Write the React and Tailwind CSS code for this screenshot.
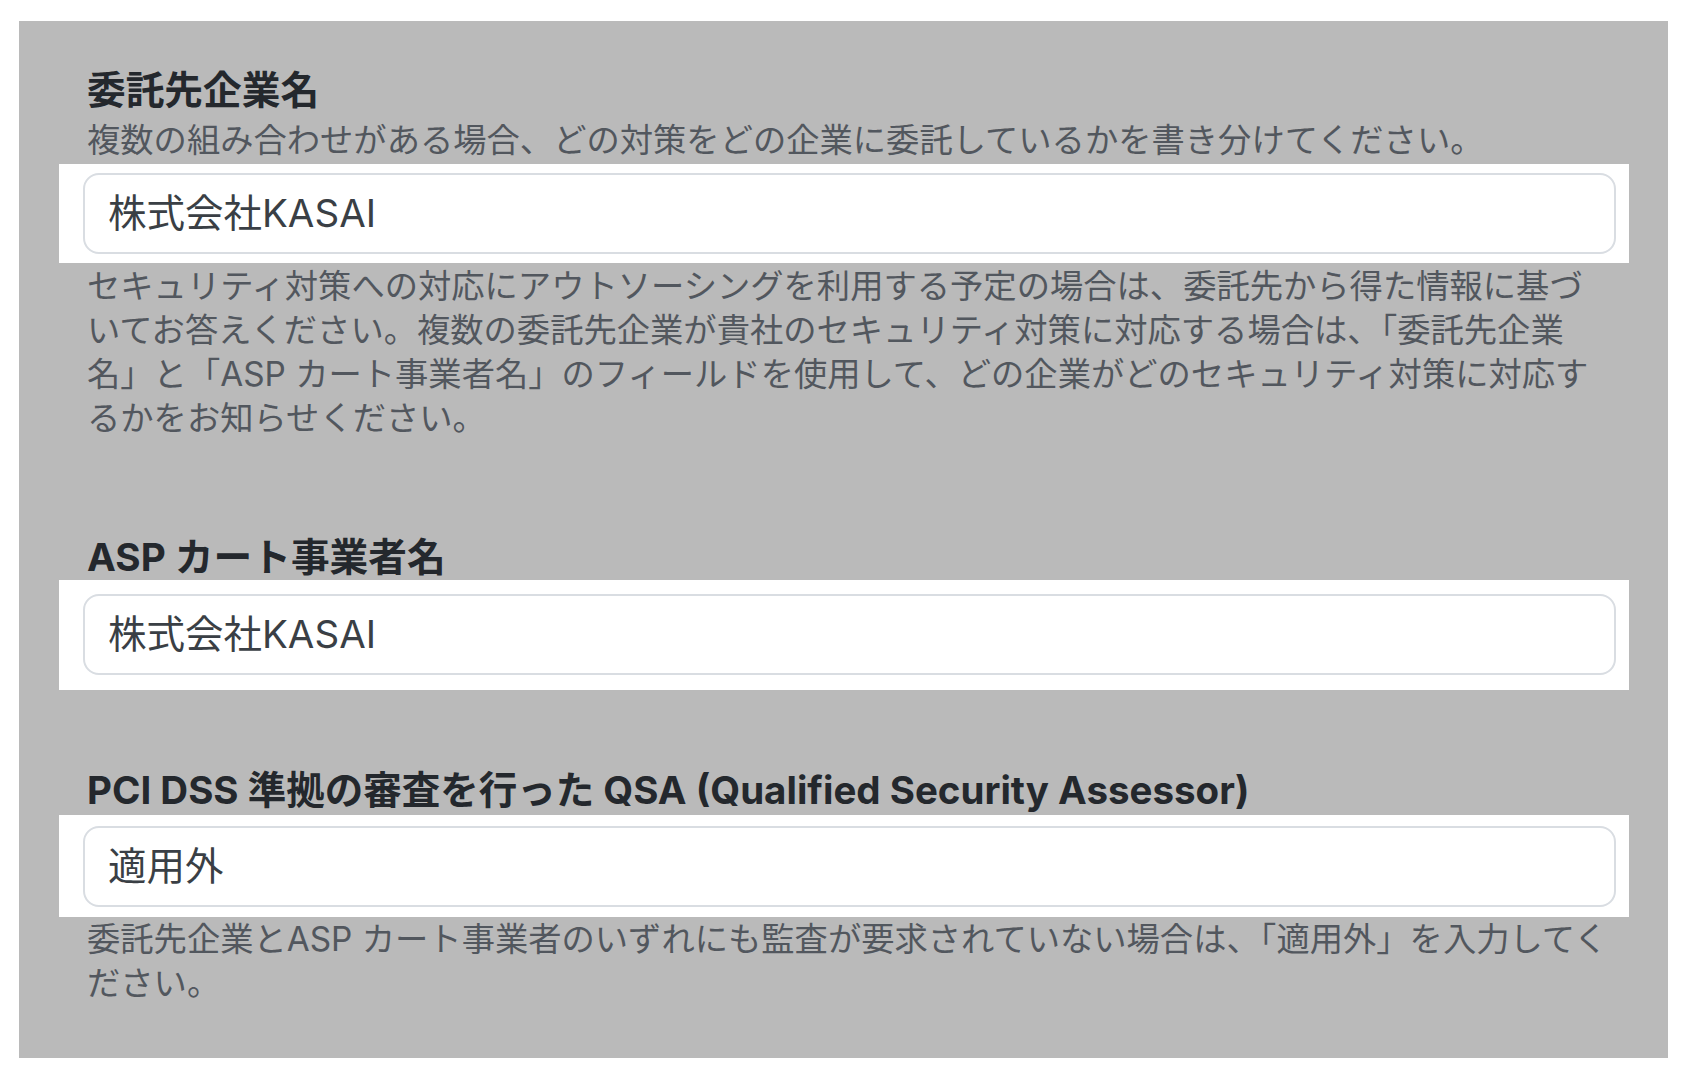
import React from "react";

const FONT = { fontFamily: 'Inter, "Noto Sans CJK JP", sans-serif' };

function Line({ children }) {
  return <span className="block whitespace-nowrap">{children}</span>;
}

function InputBand({ value, pt, pb, mt }) {
  return (
    <div className={`-ml-[28px] w-[1570px] bg-white pl-[24px] pr-[13px] ${pt} ${pb} ${mt}`}>
      <div className="flex h-[81px] items-center rounded-[16px] border-2 border-[#d9dde2] bg-white pl-[23px] text-[38.5px] text-[#3a3f45]">
        {value}
      </div>
    </div>
  );
}

export default function App() {
  return (
    <div className="min-h-[1080px] w-[1688px] bg-white pt-[21px] pl-[19px]" style={FONT}>
      <div className="flex h-[1037px] w-[1649px] flex-col bg-[#bababa] pl-[68px] pt-[50px]">
        <h2 className="text-[38.7px] font-bold leading-[38px] text-[#24282d]">委託先企業名</h2>
        <p className="mt-[9px] text-[33.3px] leading-[44px] text-[#52575e]">
          複数の組み合わせがある場合、どの対策をどの企業に委託しているかを書き分けてください。
        </p>
        <InputBand value="株式会社KASAI" pt="pt-[9px]" pb="pb-[9px]" mt="mt-[2px]" />
        <div className="mt-[1px] text-[33.3px] leading-[44px] text-[#52575e]">
          <Line>セキュリティ対策への対応にアウトソーシングを利用する予定の場合は、委託先から得た情報に基づ</Line>
          <Line>いてお答えください。複数の委託先企業が貴社のセキュリティ対策に対応する場合は、「委託先企業</Line>
          <Line>名」と「ASP カート事業者名」のフィールドを使用して、どの企業がどのセキュリティ対策に対応す</Line>
          <Line>るかをお知らせください。</Line>
        </div>

        <h2 className="mt-[98px] text-[38.7px] font-bold leading-[38px] text-[#24282d]">ASP カート事業者名</h2>
        <InputBand value="株式会社KASAI" pt="pt-[14px]" pb="pb-[15px]" mt="mt-[4px]" />

        <h2 className="mt-[81px] text-[38.5px] font-bold leading-[38px] text-[#24282d]">
          PCI DSS 準拠の審査を行った QSA (Qualified Security Assessor)
        </h2>
        <InputBand value="適用外" pt="pt-[11px]" pb="pb-[10px]" mt="mt-[6px]" />
        <div className="text-[33.3px] leading-[44px] text-[#52575e]">
          <Line>委託先企業とASP カート事業者のいずれにも監査が要求されていない場合は、「適用外」を入力してく</Line>
          <Line>ださい。</Line>
        </div>
      </div>
    </div>
  );
}
